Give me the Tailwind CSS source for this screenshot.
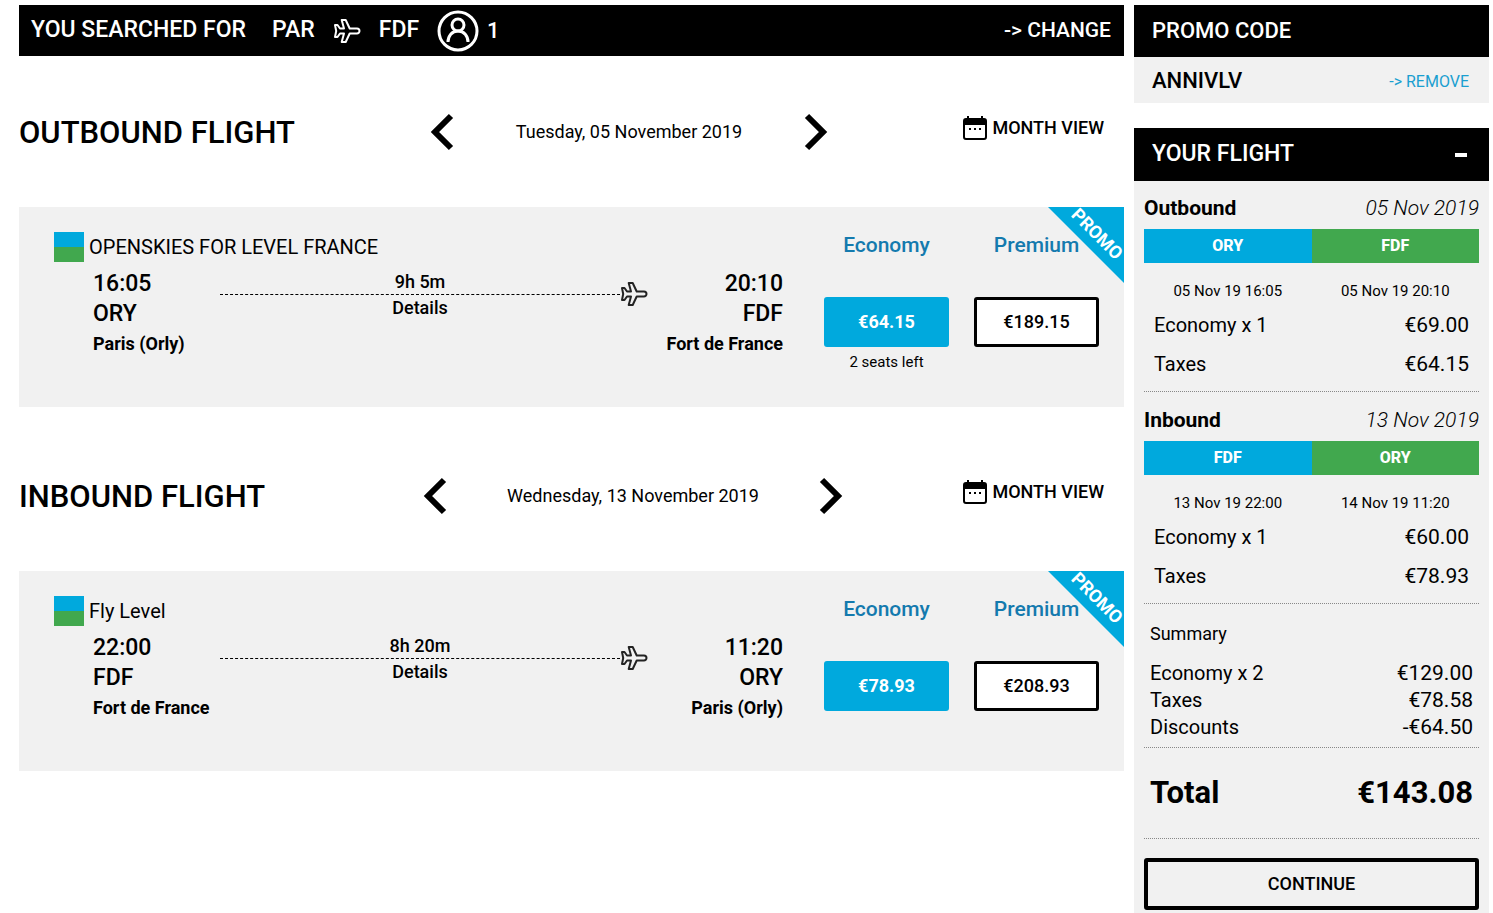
<!DOCTYPE html>
<html lang="en">

<head>
  <meta charset="UTF-8" />
  <meta name="viewport" content="width=device-width, initial-scale=1.0" />
  <script src="https://cdn.jsdelivr.net/npm/@tailwindcss/browser@4"></script>
  <title>Select your flight</title>
</head>

<body class="bg-white text-black font-['Roboto',sans-serif]">
  <!-- Shared icons -->
  <svg class="hidden">
    <symbol id="plane" viewBox="0 0 28 26">
      <path stroke-linejoin="round" d="M2 7h2.500l2.500 3.500h4L8.700 2h4l4 8.500H24a2.500 2.500 0 0 1 0 5h-7.300l-4 8.500h-4l2.300-8.500H7L4.500 19H2l1.200-6z" />
    </symbol>
    <symbol id="calendar" viewBox="0 0 24 26">
      <path fill-rule="evenodd" d="M4 1h2v2h12V1h2v2h1a3 3 0 0 1 3 3v16a3 3 0 0 1-3 3H3a3 3 0 0 1-3-3V6a3 3 0 0 1 3-3h1zM2 10v12a1 1 0 0 0 1 1h18a1 1 0 0 0 1-1V10z" />
      <path d="M6 13h2v2H6zM11 13h2v2h-2zM16 13h2v2h-2z" />
    </symbol>
  </svg>

  <div class="flex items-start gap-[10px] pl-[19px] pr-1 pt-[5px]">
    <main class="flex-1">
      <!-- Search summary -->
      <header class="flex h-[51px] items-center bg-black pl-3 pr-[13px] text-[23px] font-medium text-white">
        <h1>YOU SEARCHED FOR</h1>
        <span class="ml-[26px]">PAR</span>
        <svg class="ml-[18px] h-[26px] w-7 fill-none stroke-white stroke-2"><use href="#plane" /></svg>
        <span class="ml-[18px]">FDF</span>
        <svg class="ml-[18px] size-[42px] fill-none stroke-white stroke-3" viewBox="0 0 42 42">
          <circle cx="21" cy="21" r="19" />
          <circle cx="21" cy="15" r="6" />
          <path d="M11 32c0-6 4-11 10-11s10 5 10 11" />
        </svg>
        <span class="ml-2 text-[22px]">1</span>
        <a href="#" class="ml-auto text-[21px]">-&gt; CHANGE</a>
      </header>

      <!-- Outbound -->
      <section>
        <div class="flex h-[151px] items-center">
          <h2 class="w-[400px] pt-1 text-[31px] font-medium">OUTBOUND FLIGHT</h2>
          <div class="flex flex-1 items-center">
            <div class="flex w-[420px] items-center justify-center gap-[62px]">
              <button aria-label="Previous day"><svg class="h-[38px] w-6 fill-none stroke-black stroke-6" viewBox="0 0 24 38"><path d="M21 3 5 19l16 16" /></svg></button>
              <span class="text-lg">Tuesday, 05 November 2019</span>
              <button aria-label="Next day"><svg class="h-[38px] w-6 fill-none stroke-black stroke-6" viewBox="0 0 24 38"><path d="m3 3 16 16L3 35" /></svg></button>
            </div>
            <button class="ml-auto mr-5 flex items-center gap-[5px] pb-2 text-lg font-medium">
              <svg class="h-[26px] w-6"><use href="#calendar" /></svg>MONTH VIEW
            </button>
          </div>
        </div>

        <article class="relative flex h-[200px] bg-[#f1f1f1] pl-[35px] pr-[25px]">
          <div class="flex-1 pt-[25px]">
            <div class="flex h-[30px] items-center gap-[5px] text-xl leading-7">
              <span class="size-[30px] border-t-[15px] border-[#00a9dd] bg-[#41a84e]"></span>OPENSKIES FOR LEVEL FRANCE
            </div>
            <div class="flex pl-[39px] pr-[41px] pt-[7px]">
              <div class="w-[127px]">
                <p class="text-[23px] leading-[30px] font-medium">16:05</p>
                <p class="text-[23px] leading-[30px] font-medium">ORY</p>
                <p class="text-lg leading-[30px] font-bold">Paris (Orly)</p>
              </div>
              <div class="flex flex-1 items-start">
                <div class="flex-1 text-center text-lg leading-[25px] font-medium">
                  <p class="border-b border-dashed border-black">9h 5m</p>
                  <button>Details</button>
                </div>
                <svg class="mt-3 h-[26px] w-7 fill-none stroke-[#222] stroke-2"><use href="#plane" /></svg>
              </div>
              <div class="w-[135px] text-right">
                <p class="text-[23px] leading-[30px] font-medium">20:10</p>
                <p class="text-[23px] leading-[30px] font-medium">FDF</p>
                <p class="text-lg leading-[30px] font-bold">Fort de France</p>
              </div>
            </div>
          </div>
          <div class="flex gap-[25px] pt-[22px] text-center">
            <div class="w-[125px]">
              <h3 class="text-[21px] leading-8 font-medium text-[#147aae]">Economy</h3>
              <button class="mt-9 h-[50px] w-full rounded-[3px] bg-[#00a9dd] text-lg font-bold text-white">€64.15</button>
              <p class="pt-1 text-[15px] leading-[22px]">2 seats left</p>
            </div>
            <div class="w-[125px]">
              <h3 class="text-[21px] leading-8 font-medium text-[#147aae]">Premium</h3>
              <button class="mt-9 h-[50px] w-full rounded-[3px] border-3 border-black bg-white text-lg font-medium">€189.15</button>
            </div>
          </div>
          <div class="absolute right-0 top-0 size-[76px] bg-[#00a9dd] [clip-path:polygon(0_0,100%_0,100%_100%)]">
            <span class="absolute left-[49px] top-[27px] -translate-x-1/2 -translate-y-1/2 rotate-45 text-lg leading-5 font-bold text-white">PROMO</span>
          </div>
        </article>
      </section>

      <!-- Inbound -->
      <section class="pt-[13px]">
        <div class="flex h-[151px] items-center">
          <h2 class="w-[400px] pt-1 text-[31px] font-medium">INBOUND FLIGHT</h2>
          <div class="flex flex-1 items-center">
            <div class="flex w-[428px] items-center justify-center gap-[60px]">
              <button aria-label="Previous day"><svg class="h-[38px] w-6 fill-none stroke-black stroke-6" viewBox="0 0 24 38"><path d="M21 3 5 19l16 16" /></svg></button>
              <span class="text-lg">Wednesday, 13 November 2019</span>
              <button aria-label="Next day"><svg class="h-[38px] w-6 fill-none stroke-black stroke-6" viewBox="0 0 24 38"><path d="m3 3 16 16L3 35" /></svg></button>
            </div>
            <button class="ml-auto mr-5 flex items-center gap-[5px] pb-2 text-lg font-medium">
              <svg class="h-[26px] w-6"><use href="#calendar" /></svg>MONTH VIEW
            </button>
          </div>
        </div>

        <article class="relative flex h-[200px] bg-[#f1f1f1] pl-[35px] pr-[25px]">
          <div class="flex-1 pt-[25px]">
            <div class="flex h-[30px] items-center gap-[5px] text-xl leading-7">
              <span class="size-[30px] border-t-[15px] border-[#00a9dd] bg-[#41a84e]"></span>Fly Level
            </div>
            <div class="flex pl-[39px] pr-[41px] pt-[7px]">
              <div class="w-[127px]">
                <p class="text-[23px] leading-[30px] font-medium">22:00</p>
                <p class="text-[23px] leading-[30px] font-medium">FDF</p>
                <p class="text-lg leading-[30px] font-bold">Fort de France</p>
              </div>
              <div class="flex flex-1 items-start">
                <div class="flex-1 text-center text-lg leading-[25px] font-medium">
                  <p class="border-b border-dashed border-black">8h 20m</p>
                  <button>Details</button>
                </div>
                <svg class="mt-3 h-[26px] w-7 fill-none stroke-[#222] stroke-2"><use href="#plane" /></svg>
              </div>
              <div class="w-[135px] text-right">
                <p class="text-[23px] leading-[30px] font-medium">11:20</p>
                <p class="text-[23px] leading-[30px] font-medium">ORY</p>
                <p class="text-lg leading-[30px] font-bold">Paris (Orly)</p>
              </div>
            </div>
          </div>
          <div class="flex gap-[25px] pt-[22px] text-center">
            <div class="w-[125px]">
              <h3 class="text-[21px] leading-8 font-medium text-[#147aae]">Economy</h3>
              <button class="mt-9 h-[50px] w-full rounded-[3px] bg-[#00a9dd] text-lg font-bold text-white">€78.93</button>
            </div>
            <div class="w-[125px]">
              <h3 class="text-[21px] leading-8 font-medium text-[#147aae]">Premium</h3>
              <button class="mt-9 h-[50px] w-full rounded-[3px] border-3 border-black bg-white text-lg font-medium">€208.93</button>
            </div>
          </div>
          <div class="absolute right-0 top-0 size-[76px] bg-[#00a9dd] [clip-path:polygon(0_0,100%_0,100%_100%)]">
            <span class="absolute left-[49px] top-[27px] -translate-x-1/2 -translate-y-1/2 rotate-45 text-lg leading-5 font-bold text-white">PROMO</span>
          </div>
        </article>
      </section>
    </main>

    <aside class="w-[355px]">
      <!-- Promo code -->
      <section class="bg-[#f1f1f1]">
        <h2 class="bg-black px-[18px] text-[22px] leading-[52px] font-medium text-white">PROMO CODE</h2>
        <div class="flex h-[46px] items-center justify-between pl-[18px] pr-5">
          <span class="text-[22px] font-medium">ANNIVLV</span>
          <a href="#" class="pt-1 text-base text-[#1a9fd0]">-&gt; REMOVE</a>
        </div>
      </section>

      <!-- Basket -->
      <section class="mt-[25px] bg-[#f1f1f1]">
        <div class="flex h-[53px] items-center justify-between bg-black pl-[18px] pr-[22px] text-white">
          <h2 class="text-[23px] font-medium">YOUR FLIGHT</h2>
          <button aria-label="Collapse" class="h-4 w-3"><span class="block h-1 bg-white"></span></button>
        </div>

        <div class="px-[10px] pb-1 pt-[10px]">
          <div class="border-b border-dotted border-[#888]">
            <div class="flex h-[38px] justify-between text-[21px] leading-[34px]">
              <h3 class="font-bold">Outbound</h3>
              <span class="font-light italic">05 Nov 2019</span>
            </div>
            <div class="grid h-[34px] grid-cols-2 text-center text-base leading-[34px] font-extrabold text-white">
              <span class="bg-[#00a9dd]">ORY</span>
              <span class="bg-[#41a84e]">FDF</span>
            </div>
            <div class="grid grid-cols-2 pt-4 text-center text-[15px] leading-6">
              <span>05 Nov 19 16:05</span>
              <span>05 Nov 19 20:10</span>
            </div>
            <dl class="grid grid-cols-2 px-[10px] pb-[7px] pt-[3px] text-xl leading-[39px]">
              <dt>Economy x 1</dt>
              <dd class="text-right text-[21px]">€69.00</dd>
              <dt>Taxes</dt>
              <dd class="text-right text-[21px]">€64.15</dd>
            </dl>
          </div>

          <div class="border-b border-dotted border-[#888] pt-[11px]">
            <div class="flex h-[38px] justify-between text-[21px] leading-[34px]">
              <h3 class="font-bold">Inbound</h3>
              <span class="font-light italic">13 Nov 2019</span>
            </div>
            <div class="grid h-[34px] grid-cols-2 text-center text-base leading-[34px] font-extrabold text-white">
              <span class="bg-[#00a9dd]">FDF</span>
              <span class="bg-[#41a84e]">ORY</span>
            </div>
            <div class="grid grid-cols-2 pt-4 text-center text-[15px] leading-6">
              <span>13 Nov 19 22:00</span>
              <span>14 Nov 19 11:20</span>
            </div>
            <dl class="grid grid-cols-2 px-[10px] pb-[7px] pt-[3px] text-xl leading-[39px]">
              <dt>Economy x 1</dt>
              <dd class="text-right text-[21px]">€60.00</dd>
              <dt>Taxes</dt>
              <dd class="text-right text-[21px]">€78.93</dd>
            </dl>
          </div>

          <div class="border-b border-dotted border-[#888] px-[6px] pb-[6px] pt-4">
            <h3 class="text-lg">Summary</h3>
            <dl class="grid grid-cols-2 pt-3 text-xl leading-[27px]">
              <dt>Economy x 2</dt>
              <dd class="text-right text-[21px]">€129.00</dd>
              <dt>Taxes</dt>
              <dd class="text-right text-[21px]">€78.58</dd>
              <dt>Discounts</dt>
              <dd class="text-right text-[21px]">-€64.50</dd>
            </dl>
          </div>

          <div class="flex h-[91px] items-center justify-between border-b border-dotted border-[#888] px-[6px] text-[31px] font-bold">
            <span>Total</span>
            <span>€143.08</span>
          </div>

          <button class="mt-[19px] h-[52px] w-full rounded-[3px] border-4 border-black text-lg font-medium">CONTINUE</button>
        </div>
      </section>
    </aside>
  </div>
</body>

</html>
